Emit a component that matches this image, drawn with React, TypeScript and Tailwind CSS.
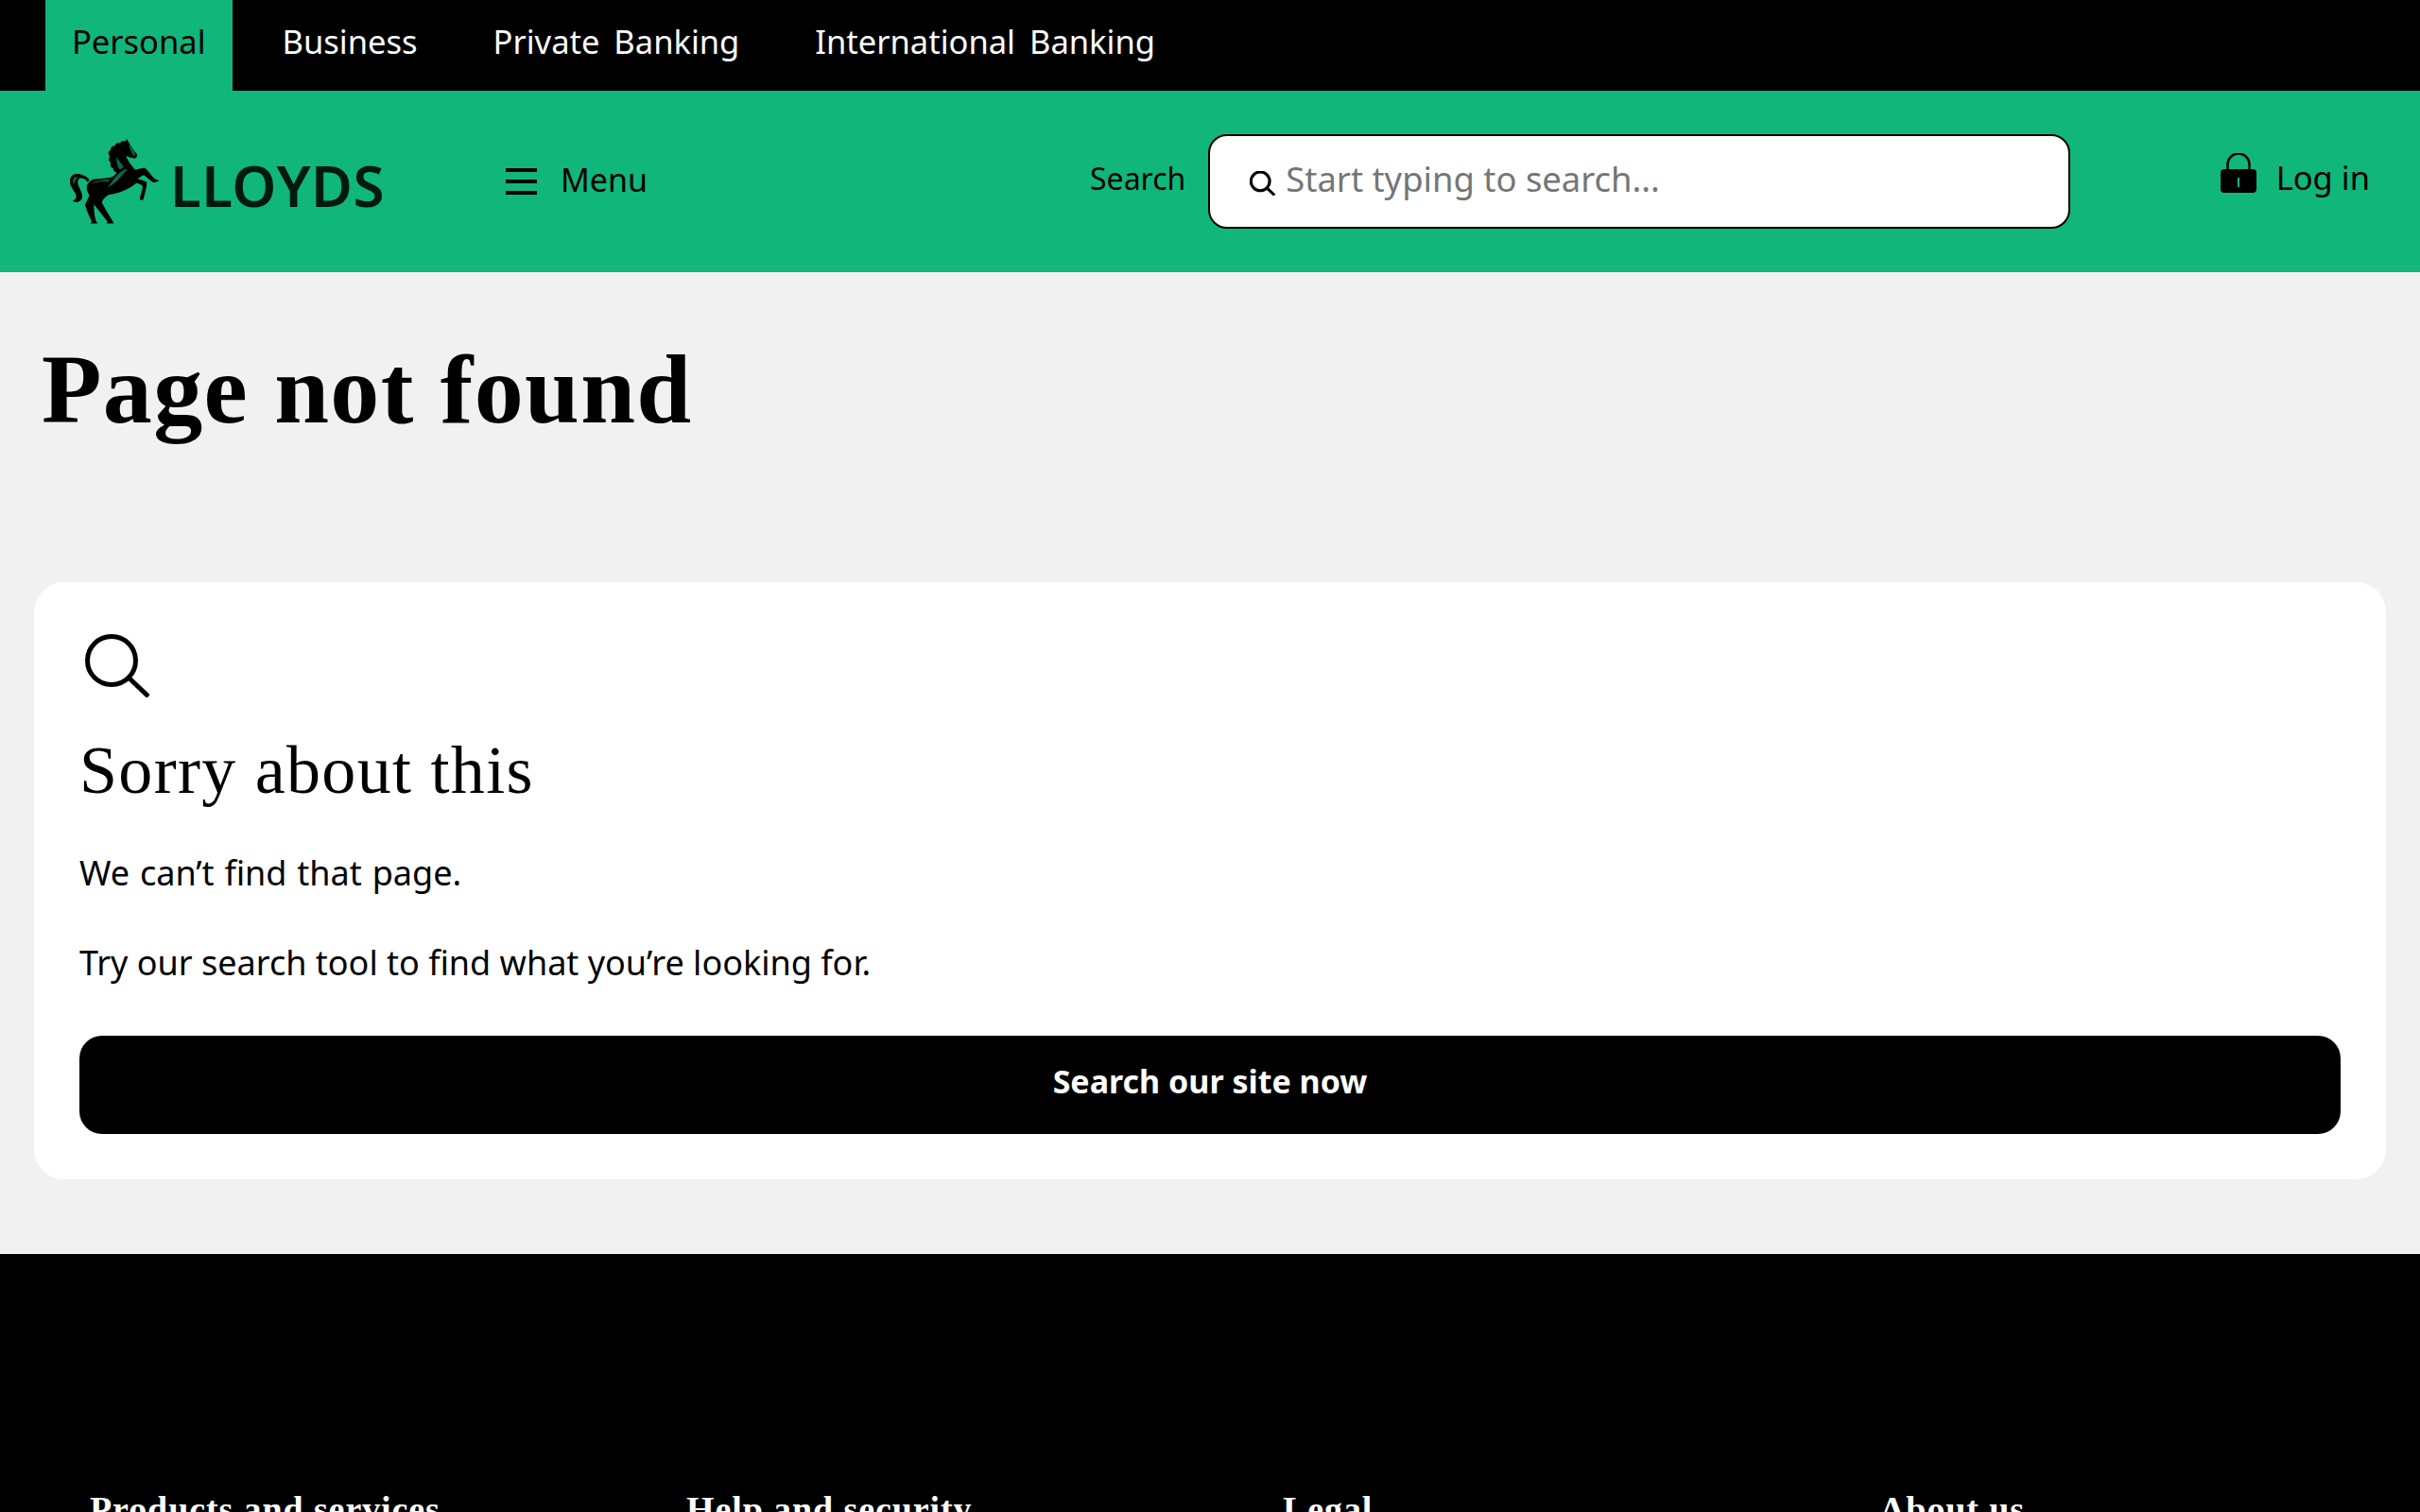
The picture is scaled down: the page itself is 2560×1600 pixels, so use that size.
const sans = "font-['Noto_Sans',sans-serif]";
const serif = "font-['Liberation_Serif',serif]";

function Horse({ className }: { className: string }) {
  return (
    <svg viewBox="74 55 285 269" className={className}>
      <path
        d="M136 184C122 168 96 160 82 170C72 178 72 194 78 206C84 218 92 226 94 236C94 244 88 250 82 252C92 258 106 256 111 246C116 234 110 222 104 210C99 198 96 188 104 180C114 176 124 182 130 192Z"
        fill="#000"
      />
      <path
        d="M255 55L258 62C266 72 274 90 287 103C289 110 284 117 277 116C268 115 258 112 251 108C256 120 268 140 281 152C290 152 300 147 311 146C322 155 335 175 346 183L358 187L340 193C328 187 318 175 308 169C302 172 294 177 288 181C298 184 310 187 318 191C318 208 312 228 306 248L297 249C295 240 298 232 301 224C304 214 306 206 303 202C296 198 290 195 284 195C270 208 240 226 196 232C186 238 178 246 175 256C186 276 200 300 210 316L213 323L190 323L193 317L150 262C150 282 153 304 157 316L162 323L140 323L143 316C134 298 126 280 122 262C128 250 134 240 135 232C128 222 125 208 130 198C134 190 142 184 150 182C170 181 190 180 206 176C214 172 220 166 222 160C214 158 210 154 212 148C204 146 200 138 204 130C196 126 196 116 201 110C194 104 195 94 203 90C202 82 208 76 216 77C218 68 226 65 233 68C236 60 244 60 248 63Z"
        fill="#000"
      />
      <path d="M88 176c-6 6-6 16-2 24 2-10 6-18 14-24z" fill="#0b6a4b" />
      <path d="M222 112c-2 16 6 36 10 40l13-9c-9-11-17-21-23-31z" fill="#0b6a4b" />
      <path d="M252 150c-14 6-26 16-36 28-8 12-16 22-24 30 14-4 30-18 42-32 6-8 14-18 22-22z" fill="#0b6a4b" />
      <path d="M262 68c6 12 14 26 20 36l-6 4c-8-12-14-26-14-40z" fill="#0b6a4b" />
      <path d="M140 198c10-9 40-12 62-15l-6 6c-20 1-42 3-56 9z" fill="#0b6a4b" />
    </svg>
  );
}

function SearchGlyph({ className, weight }: { className: string; weight: number }) {
  return (
    <svg viewBox="0 0 68 67" fill="none" stroke="currentColor" className={className}>
      <circle cx="28" cy="28" r="25.5" strokeWidth={weight} />
      <path d="M46 46l21 20" strokeWidth={weight} />
    </svg>
  );
}

const sectors = [
  { label: 'Personal', active: true },
  { label: 'Business', active: false },
  { label: 'Private Banking', active: false },
  { label: 'International Banking', active: false },
];

const footerHeadings = ['Products and services', 'Help and security', 'Legal', 'About us'];

export default function App() {
  return (
    <div className={`h-[1600px] overflow-hidden flex flex-col bg-[#f1f1f1] text-black ${sans}`}>
      {/* Sector bar */}
      <nav className="h-24 shrink-0 bg-black flex pl-12 gap-[26px] [word-spacing:6px]">
        {sectors.map((s) => (
          <a
            key={s.label}
            href="#"
            className={`h-24 pb-2 flex items-center text-[34.5px] ${
              s.active ? 'bg-[#11b67a] text-black px-[28px]' : 'text-white px-[27px]'
            }`}
          >
            {s.label}
          </a>
        ))}
      </nav>

      {/* Header */}
      <header className="h-48 shrink-0 bg-[#11b67a] flex items-center pl-[74px] pr-[53px]">
        <div className="flex items-center gap-[11px] w-[461px]">
          <Horse className="w-[95px] h-[90px] shrink-0" />
          <span className="text-[60px] leading-none font-semibold tracking-[0.5px] pt-[8px] text-[#001a10]">LLOYDS</span>
        </div>
        <a href="#" className="flex items-center gap-[25px]">
          <span className="w-[33px] h-[28px] flex flex-col justify-between">
            <span className="h-1 bg-black" />
            <span className="h-1 bg-black" />
            <span className="h-1 bg-black" />
          </span>
          <span className="text-[34px] pb-[3px]">Menu</span>
        </a>
        <div className="flex items-center gap-[24px] ml-[468px]">
          <label className="text-[32px] pb-[6px]">Search</label>
          <div className="w-[912px] h-[100px] bg-white border-2 border-black rounded-[20px] flex items-center pl-[42px] gap-[11px]">
            <SearchGlyph className="w-[27px] h-[26px] shrink-0 mt-1" weight={8} />
            <span className="text-[36.4px] pb-[6px] text-[#757575]">Start typing to search...</span>
          </div>
        </div>
        <a href="#" className="ml-auto flex items-center gap-[21px] pb-[8px]">
          <svg viewBox="0 0 38 42" className="w-[38px] h-[42px] mb-[10px]">
            <path d="M7.5 18v-6a11.5 11.5 0 0123 0v6" fill="none" stroke="#000" strokeWidth="2.5" />
            <path
              fillRule="evenodd"
              d="M4 17h30a4 4 0 014 4v17a4 4 0 01-4 4H4a4 4 0 01-4-4V21a4 4 0 014-4zm14 9v10h2V26z"
              fill="#000"
            />
          </svg>
          <span className="text-[34.5px]">Log in</span>
        </a>
      </header>

      {/* Main */}
      <main className="shrink-0 h-[1039px] px-9 flex flex-col">
        <h1 className={`${serif} font-bold text-[104px] leading-none tracking-[1.3px] mt-[72px] ml-[8px] h-[180px]`}>
          Page not found
        </h1>
        <section className="mt-[76px] h-[632px] bg-white rounded-[32px] px-12 pt-[55px] flex flex-col">
          <SearchGlyph className="w-[68px] h-[67px] ml-[6px] shrink-0" weight={5} />
          <h2 className={`${serif} text-[72px] leading-none tracking-[1.3px] mt-[41px]`}>Sorry about this</h2>
          <p className="text-[36px] leading-[48px] mt-[49px] [word-spacing:1.5px]">We can’t find that page.</p>
          <p className="text-[36px] leading-[48px] mt-[47px]">Try our search tool to find what you’re looking for.</p>
          <button className="mt-[53px] h-[104px] pb-[8px] shrink-0 w-full bg-black text-white rounded-[24px] text-[34px] font-bold">
            Search our site now
          </button>
        </section>
      </main>

      {/* Footer, cut off by the bottom of the window */}
      <footer className="flex-1 bg-black text-white pl-[95px] pt-[246px] grid grid-cols-[repeat(4,631px)]">
        {footerHeadings.map((h) => (
          <h3 key={h} className={`${serif} text-[38px] font-bold leading-[48px] tracking-[0.9px]`}>
            {h}
          </h3>
        ))}
      </footer>
    </div>
  );
}
